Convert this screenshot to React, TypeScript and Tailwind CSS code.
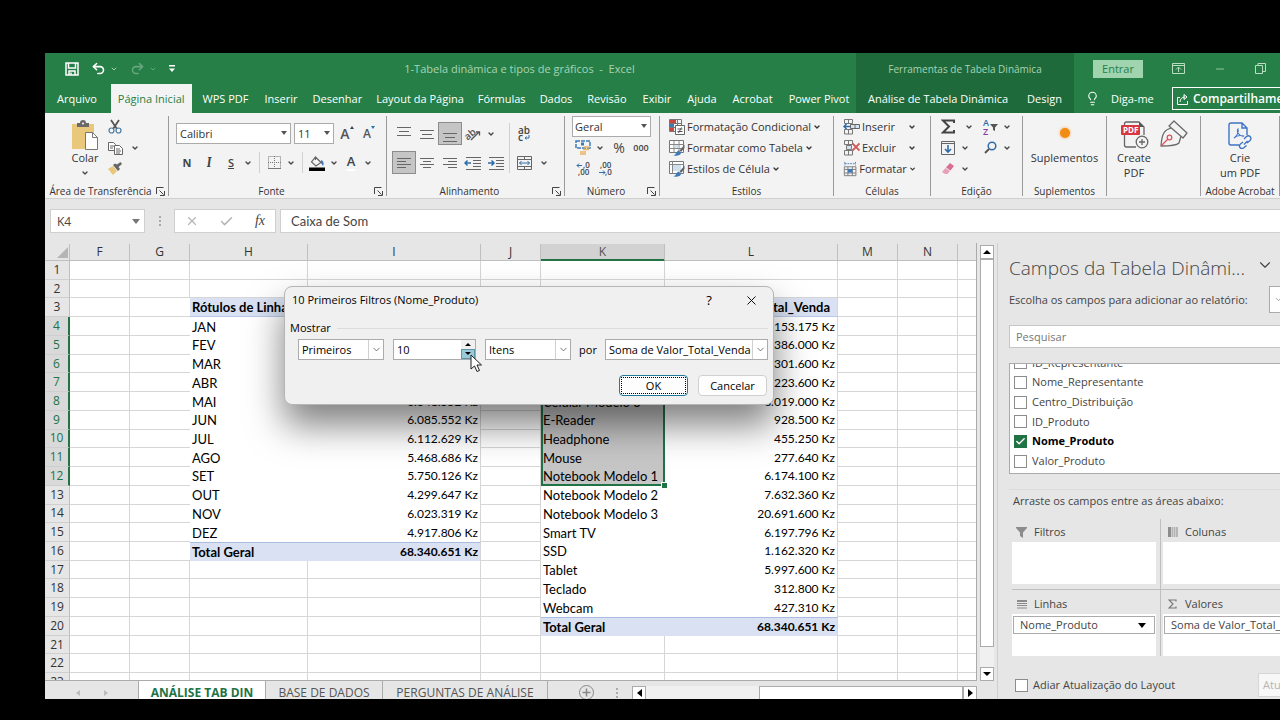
import { useState } from 'react';
import type { ReactNode } from 'react';
import clsx from 'clsx';
import { Check, ChevronDown, Lightbulb, Minus, Redo2, Undo2, X } from 'lucide-react';

type Cell = { text: string; kind: 'head' | 'body' | 'total' };

const tabs = [
  { name: 'Arquivo', className: 'px-2 mr-[6px]' },
  { name: 'Página Inicial', className: 'bg-[#f3f3f3] px-[7px] mr-[3px] text-[#267f46]' },
  { name: 'WPS PDF', className: 'px-2' },
  { name: 'Inserir', className: 'px-2' },
  { name: 'Desenhar', className: 'px-[7px]' },
  { name: 'Layout da Página', className: 'px-[7px]' },
  { name: 'Fórmulas', className: 'px-[7px]' },
  { name: 'Dados', className: 'px-[7px]' },
  { name: 'Revisão', className: 'px-2' },
  { name: 'Exibir', className: 'px-2' },
  { name: 'Ajuda', className: 'px-2' },
  { name: 'Acrobat', className: 'px-2' },
  { name: 'Power Pivot', className: 'pl-2' },
];

const columns = [
  { id: 'F', width: 'w-[60px]' },
  { id: 'G', width: 'w-[60px]' },
  { id: 'H', width: 'w-[118px]' },
  { id: 'I', width: 'w-[173px]' },
  { id: 'J', width: 'w-[60px]' },
  { id: 'K', width: 'w-[124px]' },
  { id: 'L', width: 'w-[173px]' },
  { id: 'M', width: 'w-[60px]' },
  { id: 'N', width: 'w-[60px]' },
];

// both pivot tables start on row 3
const months = [
  ['Rótulos de Linha', 'Soma de Valor_Total_Venda'],
  ['JAN', '5.418.320 Kz'],
  ['FEV', '5.106.744 Kz'],
  ['MAR', '5.882.190 Kz'],
  ['ABR', '6.034.460 Kz'],
  ['MAI', '6.341.552 Kz'],
  ['JUN', '6.085.552 Kz'],
  ['JUL', '6.112.629 Kz'],
  ['AGO', '5.468.686 Kz'],
  ['SET', '5.750.126 Kz'],
  ['OUT', '4.299.647 Kz'],
  ['NOV', '6.023.319 Kz'],
  ['DEZ', '4.917.806 Kz'],
  ['Total Geral', '68.340.651 Kz'],
];

const products = [
  ['Rótulos de Linha', 'Soma de Valor_Total_Venda'],
  ['Caixa de Som', '153.175 Kz'],
  ['Câmera', '386.000 Kz'],
  ['Celular Modelo 1', '4.301.600 Kz'],
  ['Celular Modelo 2', '6.223.600 Kz'],
  ['Celular Modelo 3', '8.019.000 Kz'],
  ['E-Reader', '928.500 Kz'],
  ['Headphone', '455.250 Kz'],
  ['Mouse', '277.640 Kz'],
  ['Notebook Modelo 1', '6.174.100 Kz'],
  ['Notebook Modelo 2', '7.632.360 Kz'],
  ['Notebook Modelo 3', '20.691.600 Kz'],
  ['Smart TV', '6.197.796 Kz'],
  ['SSD', '1.162.320 Kz'],
  ['Tablet', '5.997.600 Kz'],
  ['Teclado', '312.800 Kz'],
  ['Webcam', '427.310 Kz'],
  ['Total Geral', '68.340.651 Kz'],
];

function getCell(col: string, row: number): Cell | null {
  const source = col === 'H' || col === 'I' ? months : col === 'K' || col === 'L' ? products : null;
  const line = source?.[row - 3];
  if (!source || !line) return null;
  const text = line[col === 'H' || col === 'K' ? 0 : 1];
  const kind = row === 3 ? 'head' : row - 3 === source.length - 1 ? 'total' : 'body';
  return { text, kind };
}

/* ---------- small pieces ---------- */

function Caret({ label }: { label: string }) {
  return (
    <button aria-label={label} className="flex h-[21px] w-3 shrink-0 items-center justify-center">
      <ChevronDown size={8} strokeWidth={4} color="#444" />
    </button>
  );
}

function Tool({ label, active, children }: { label: string; active?: boolean; children: ReactNode }) {
  return (
    <button
      aria-label={label}
      className={clsx(
        'flex h-[21px] w-[22px] shrink-0 items-center justify-center',
        active && 'bg-[#c5c5c5] outline outline-[#8c8c8c]'
      )}
    >
      {children}
    </button>
  );
}

function Sep() {
  return <span className="mr-[3px] h-[21px] w-[6px] border-r border-[#d0d0d0]" />;
}

function Group({
  label,
  width,
  launcher,
  children,
}: {
  label: string;
  width: string;
  launcher?: boolean;
  children: ReactNode;
}) {
  return (
    <section aria-label={label} className={clsx('flex shrink-0 flex-col border-r border-[#9a9a9a]', width)}>
      <div className="h-[70px] shrink-0">{children}</div>
      <div className="flex h-[10px] shrink-0 items-center text-[10px]">
        <span className="flex-1 text-center whitespace-nowrap">{label}</span>
        {launcher && (
          <button aria-label={`Mais opções de ${label}`} className="mr-[3px]">
            <svg width="9" height="9" viewBox="0 0 9 9" fill="none" stroke="#444">
              <path d="M.5 7V.5h7M3.500 3.500l4 4M8.500 4v4.500H4" />
            </svg>
          </button>
        )}
      </div>
    </section>
  );
}

function Lines({ rows, color = '#666' }: { rows: [number, number, number][]; color?: string }) {
  return (
    <svg width="16" height="16" viewBox="0 0 16 16" stroke={color} fill="none">
      {rows.map(([x1, x2, y]) => (
        <path key={y} d={`M${x1} ${y}H${x2}`} />
      ))}
    </svg>
  );
}

function IndentIcon({ right }: { right?: boolean }) {
  return (
    <svg width="18" height="16" viewBox="0 0 18 16" fill="none">
      <path d="M2 2.500h15M9 5.500h8M9 8.500h8M9 11.500h8M2 14.500h15" stroke="#666" />
      <path d={right ? 'M1 8h6M4.500 5.500L7 8l-2.500 2.500' : 'M7 8H1M3.500 5.500L1 8l2.500 2.500'} stroke="#2f6ca8" strokeWidth="1.500" />
    </svg>
  );
}

function SaveIcon() {
  return (
    <svg width="14" height="14" viewBox="0 0 14 14" fill="none" stroke="#fff" strokeWidth="1.500">
      <path d="M1 1h12v12H1zM3.500 1v5h7V1" />
      <path d="M4 13V9h6v4" />
      <path d="M6 10.500v2" />
    </svg>
  );
}

function PasteIcon() {
  return (
    <svg width="28" height="30" viewBox="0 0 28 30">
      <rect x="1" y="4" width="22" height="25" fill="#e9c77b" />
      <path d="M6 3h3a3 3 0 016 0h3v4H6z" fill="#6a6a6a" />
      <circle cx="12" cy="3.500" r="1" fill="#fff" />
      <path d="M14.500 12.500h7l5 5v12h-12z" fill="#fff" stroke="#777" />
      <path d="M21.500 12.500v5h5" fill="none" stroke="#777" />
    </svg>
  );
}

function CutIcon() {
  return (
    <svg width="14" height="15" viewBox="0 0 14 15" fill="none">
      <path d="M3 1l6 9M11 1L5 10" stroke="#555" strokeWidth="1.800" />
      <circle cx="3.500" cy="11.500" r="2.500" stroke="#4a7ba0" strokeWidth="1.200" />
      <circle cx="10.500" cy="11.500" r="2.500" stroke="#4a7ba0" strokeWidth="1.200" />
    </svg>
  );
}

function CopyIcon() {
  return (
    <svg width="15" height="14" viewBox="0 0 15 14" fill="#fff" stroke="#666">
      <path d="M.5 1.500h5l2 2v6h-7zM2 5h4M2 7h3" />
      <path d="M6.500 4.500h5l3 3v6h-8zM8 8h4M8 10h5M8 12h4" />
    </svg>
  );
}

function BrushIcon() {
  return (
    <svg width="16" height="15" viewBox="0 0 16 15">
      <path d="M1 8l5-3 4 5-4 4z" fill="#e9c77b" />
      <path d="M6 4l5 6 2-2-1.500-2L15 3l-1.500-2L10 3.500 8 2.500z" fill="#666" />
    </svg>
  );
}

function FormatTableIcon({ variant }: { variant: 'cond' | 'table' | 'style' }) {
  if (variant === 'cond') {
    return (
      <svg width="16" height="16" viewBox="0 0 16 16" fill="none">
        <path d="M.5.5h12v12H.5zM.5 4.500h12M.5 8.500h12M4.500.5v12M8.500.5v12" stroke="#777" />
        <path d="M1 1h6v3H1z" fill="#c9433f" />
        <path d="M1 5h4v3H1z" fill="#3d7ab8" />
        <path d="M1 9h3v3H1z" fill="#c9433f" />
        <path d="M6.500 6.500h9v9h-9z" fill="#fff" stroke="#666" />
        <path d="M8.500 10h5M8.500 12.500h5M12.500 8.500l-3 5.500" stroke="#555" />
      </svg>
    );
  }
  return (
    <svg width="16" height="16" viewBox="0 0 16 16" fill="none">
      <path d="M.5.5h14v12H.5z" fill="#fff" stroke="#777" />
      <path
        d={variant === 'table' ? 'M.5 4.500h14M.5 8.500h14M5 .5v12M10 .5v12' : 'M.5 3.500h14M3.500 .5v12'}
        stroke="#888"
      />
      <path d={variant === 'table' ? 'M5.500 5h4v3h-4z' : 'M4 4h8v6H4z'} fill="#cfe0ef" />
      <path d="M15.500 4.500l-5 6 1.500 1.500 3.500-4z" fill="#666" />
      <path d="M4 15.500c3 0 3-4 5.500-5l2.500 2c0 3-4 3.500-8 3z" fill="#3d7ab8" />
    </svg>
  );
}

function CellsIcon({ variant }: { variant: 'insert' | 'delete' | 'format' }) {
  if (variant === 'format') {
    return (
      <svg width="16" height="16" viewBox="0 0 16 16" fill="none">
        <path d="M2 0v4M14 0v4M2 2h12" stroke="#3d7ab8" strokeDasharray="2 1" />
        <path d="M1.500 5.500h13v10h-13zM1.500 8.500h13M1.500 12.500h13M5.500 5.500v10M10.500 5.500v10" stroke="#777" />
        <path d="M5.500 8h5v4h-5z" fill="#3d7ab8" />
      </svg>
    );
  }
  return (
    <svg width="17" height="16" viewBox="0 0 17 16" fill="none">
      <path d="M1.500.5h8v4h-8zM5.500.5v4M1.500 10.500h8v4.500h-8zM5.500 10.500V15" stroke="#777" />
      {variant === 'insert' ? (
        <>
          <path d="M7.500 5.500h9v4h-9zM12 5.500v4" fill="#d5e3f0" stroke="#666" />
          <path d="M7 7.500H1M3.500 5L1 7.500 3.500 10" stroke="#2f6ca8" strokeWidth="1.500" />
        </>
      ) : (
        <>
          <path d="M3.500 5.500h5v4h-5z" fill="#d5e3f0" stroke="#777" />
          <path d="M9.500 3.500l7 7M16.500 3.500l-7 7" stroke="#cf5a5a" strokeWidth="1.800" />
        </>
      )}
    </svg>
  );
}

function PdfCreateIcon() {
  return (
    <svg width="29" height="28" viewBox="0 0 29 28" fill="none">
      <path d="M4.500 5V3a2 2 0 012-2H19l5 5v8M4.500 13v11a2 2 0 002 2H16" stroke="#666" strokeWidth="1.300" />
      <path d="M19 1v5h5z" fill="#555" />
      <rect x="1" y="4" width="19" height="10" rx="1" fill="#d7373f" />
      <text x="3" y="12" fontSize="8" fontWeight="700" fill="#fff" fontFamily="Open Sans, sans-serif">
        PDF
      </text>
      <circle cx="22" cy="21" r="5.800" fill="#f3f3f3" stroke="#666" strokeWidth="1.300" />
      <path d="M22 18v6M19 21h6" stroke="#666" strokeWidth="1.300" />
    </svg>
  );
}

function PenIcon() {
  return (
    <svg width="29" height="28" viewBox="0 0 29 28" fill="none" stroke="#6a6a6a" strokeWidth="1.300" strokeLinejoin="round">
      <path d="M10 6l5-5 13 12-4 5z" />
      <path d="M12 8C6 10 3 12 2 26c9 0 16-1 18-3l2-7" />
      <path d="M2 26l7-7" stroke="#d7575f" />
      <circle cx="10.500" cy="17.500" r="2.300" stroke="#d7575f" />
    </svg>
  );
}

function AcrobatIcon() {
  return (
    <svg width="26" height="28" viewBox="0 0 26 28" fill="none" stroke="#3f74c4" strokeWidth="1.400">
      <path d="M12 24H4a2 2 0 01-2-2V4a2 2 0 012-2h11l5 5v7M15 2v5h5" />
      <path d="M7 17c3-2 5-6 4-9-2 3 2 8 6 7-4-1-8 0-10 2z" strokeWidth="1.100" />
      <path d="M16 21l-2.500 2a2.500 2.500 0 003 4l3-2.500M20 22l3-2.500a2.500 2.500 0 00-3.500-4L17 18M17 23.500l3.500-3.500" />
    </svg>
  );
}

function LargeButton({ icon, lines, width }: { icon: ReactNode; lines: string[]; width: string }) {
  return (
    <button className={clsx('flex shrink-0 flex-col items-center pt-[3px]', width)}>
      <span className="flex h-[31px] items-center">{icon}</span>
      {lines.map((l) => (
        <span key={l} className="h-[15px] leading-[15px] whitespace-nowrap">
          {l}
        </span>
      ))}
    </button>
  );
}

/* ---------- header ---------- */

function Header() {
  return (
    <header className="flex h-[60px] shrink-0 bg-[#267f46] text-white">
      <div className="flex min-w-0 flex-1 flex-col">
        <div className="flex h-[31px] shrink-0 items-center">
          <div className="flex items-center gap-3 pl-5">
            <button aria-label="Salvar">
              <SaveIcon />
            </button>
            <button aria-label="Desfazer" className="flex items-center gap-1">
              <Undo2 size={15} strokeWidth={2.5} />
              <ChevronDown size={8} strokeWidth={3} className="opacity-60" />
            </button>
            <button aria-label="Refazer" className="flex items-center gap-1 opacity-30">
              <Redo2 size={15} strokeWidth={2.5} />
              <ChevronDown size={8} strokeWidth={3} />
            </button>
            <button aria-label="Personalizar barra">
              <svg width="6" height="8" viewBox="0 0 6 8" fill="#fff">
                <path d="M0 0h6v1.500H0zM0 3.500h6L3 7z" />
              </svg>
            </button>
          </div>
          <div className="flex-1 pl-2 text-center whitespace-pre text-[#a9d3b5]">1-Tabela dinâmica e tipos de gráficos  -  Excel</div>
        </div>
        <nav className="flex flex-1 pl-1">
          {tabs.map((t) => (
            <button key={t.name} className={clsx('shrink-0 whitespace-nowrap', t.className)}>
              {t.name}
            </button>
          ))}
        </nav>
      </div>
      <div className="flex w-[218px] shrink-0 flex-col bg-[#1e6a3a]">
        <div className="flex h-[31px] items-center justify-center text-[10px] text-[#a9d3b5]">Ferramentas de Tabela Dinâmica</div>
        <div className="flex flex-1 items-stretch justify-between px-3">
          <button className="whitespace-nowrap">Análise de Tabela Dinâmica</button>
          <button>Design</button>
        </div>
      </div>
      <div className="flex w-[206px] shrink-0 flex-col overflow-hidden">
        <div className="flex h-[31px] items-center justify-between pr-[14px] pl-[19px]">
          <button className="h-[18px] w-[50px] bg-[#9fd4af] text-[#267f46]">Entrar</button>
          <button aria-label="Opções da faixa">
            <svg width="13" height="11" viewBox="0 0 13 11" fill="none" stroke="#b9dcc3">
              <path d="M.5.5h12v10H.5zM.5 2.500h12M6.500 9V4.500M4 6.500l2.500-2.500L9 6.500" />
            </svg>
          </button>
          <button aria-label="Minimizar">
            <Minus size={12} strokeWidth={1.5} color="#b9dcc3" />
          </button>
          <button aria-label="Restaurar">
            <svg width="11" height="11" viewBox="0 0 11 11" fill="none" stroke="#b9dcc3">
              <path d="M.5 2.500h7v8h-7zM3 2.500V.5h7.500v8h-3" />
            </svg>
          </button>
        </div>
        <div className="flex flex-1 items-center pl-[11px]">
          <Lightbulb size={15} strokeWidth={1.7} className="shrink-0" />
          <button className="ml-[11px] w-[61px] shrink-0 text-left">Diga-me</button>
          <button className="flex h-[23px] shrink-0 items-center gap-1 border border-white px-1 text-[12px] font-semibold">
            <svg width="12" height="12" viewBox="0 0 12 12" fill="none" stroke="#fff">
              <path d="M3 4.500H.5v7h10V8M3 9c0-3 2-5 5-5M7 1.500L10 4 7 6.500z" />
            </svg>
            Compartilhamento
          </button>
        </div>
      </div>
    </header>
  );
}

/* ---------- ribbon ---------- */

function Ribbon() {
  return (
    <div className="flex h-[86px] shrink-0 items-start overflow-hidden border-b border-[#cfcfcf] bg-[#f3f3f3] pt-[3px] text-[#333]">
      <Group label="Área de Transferência" width="w-[124px]" launcher>
        <div className="flex">
          <div className="ml-[21px] flex w-[38px] flex-col items-center">
            <LargeButton icon={<PasteIcon />} lines={['Colar']} width="w-[38px]" />
            <ChevronDown size={8} strokeWidth={4} color="#444" className="mt-1" />
          </div>
          <div className="flex flex-col">
            <Tool label="Recortar">
              <CutIcon />
            </Tool>
            <div className="flex gap-[3px]">
              <Tool label="Copiar">
                <CopyIcon />
              </Tool>
              <Caret label="Opções de cópia" />
            </div>
            <Tool label="Pincel de formatação">
              <BrushIcon />
            </Tool>
          </div>
        </div>
      </Group>

      <Group label="Fonte" width="w-[218px]" launcher>
        <div className="flex flex-col gap-2 pt-[7px] pl-[7px]">
          <div className="flex items-center">
            <div className="relative mr-[3px]">
              <select aria-label="Fonte" className="h-[21px] w-[115px] appearance-none border border-[#ababab] bg-white px-[3px]">
                <option>Calibri</option>
              </select>
              <span className="pointer-events-none absolute top-2 right-1 border-x-[3px] border-t-[4px] border-x-transparent border-t-[#555]" />
            </div>
            <div className="relative mr-[2px]">
              <select aria-label="Tamanho" className="h-[21px] w-[40px] appearance-none border border-[#ababab] bg-white px-[3px]">
                <option>11</option>
              </select>
              <span className="pointer-events-none absolute top-2 right-1 border-x-[3px] border-t-[4px] border-x-transparent border-t-[#555]" />
            </div>
            <Tool label="Aumentar fonte">
              <span className="text-[14px] font-semibold text-[#555]">A</span>
              <span className="mb-3 border-x-[2px] border-b-[3px] border-x-transparent border-b-[#345]" />
            </Tool>
            <Tool label="Diminuir fonte">
              <span className="text-[12px] font-semibold text-[#555]">A</span>
              <span className="mb-3 border-x-[2px] border-t-[3px] border-x-transparent border-t-[#27a]" />
            </Tool>
          </div>
          <div className="flex items-center text-[#444]">
            <Tool label="Negrito">
              <b>N</b>
            </Tool>
            <Tool label="Itálico">
              <i className="font-serif text-[13px] font-semibold">I</i>
            </Tool>
            <Tool label="Sublinhado">
              <u className="font-semibold">S</u>
            </Tool>
            <Caret label="Tipos de sublinhado" />
            <Sep />
            <Tool label="Bordas">
              <svg width="13" height="13" viewBox="0 0 13 13" fill="none" stroke="#777">
                <path d="M.5.5h12v12H.5zM6.500 0v13M0 6.500h13" strokeDasharray="1 1" />
                <path d="M0 12.500h13" />
              </svg>
            </Tool>
            <Caret label="Tipos de borda" />
            <Sep />
            <Tool label="Cor de preenchimento">
              <svg width="16" height="16" viewBox="0 0 16 16" fill="none">
                <path d="M6.500 2L12 7.500 7 11 2.500 7zM6.500 5V1.500" stroke="#666" strokeWidth="1.200" />
                <path d="M12 5c3 1 3 4 2 6l-2-3z" fill="#3d7ab8" />
                <path d="M0 12.500h16V16H0z" fill="#000" />
              </svg>
            </Tool>
            <Caret label="Cores de preenchimento" />
            <Tool label="Cor da fonte">
              <span className="border-b-2 border-white text-[13px] leading-[15px] font-semibold">A</span>
            </Tool>
            <Caret label="Cores da fonte" />
          </div>
        </div>
      </Group>

      <Group label="Alinhamento" width="w-[178px]" launcher>
        <div className="flex pt-[7px] pl-[6px]">
          <div className="flex flex-col gap-2">
            <div className="flex gap-px">
              <Tool label="Alinhar acima">
                <Lines rows={[[1, 15, 1.5], [3, 13, 5.5], [1, 15, 9.5]]} />
              </Tool>
              <Tool label="Alinhar no meio">
                <Lines rows={[[1, 15, 4.5], [3, 13, 8.5], [1, 15, 12.5]]} />
              </Tool>
              <Tool label="Alinhar abaixo" active>
                <Lines rows={[[1, 15, 7.5], [3, 13, 11.5], [1, 15, 15.5]]} />
              </Tool>
              <Tool label="Orientação">
                <svg width="18" height="16" viewBox="0 0 18 16">
                  <text x="1" y="12" fontSize="10" fontWeight="600" fill="#555" transform="rotate(-40 6 10)">
                    ab
                  </text>
                  <path d="M7 14l8-8M12 6h3.500v3.500" fill="none" stroke="#555" strokeWidth="1.300" />
                </svg>
              </Tool>
              <Caret label="Opções de orientação" />
            </div>
            <div className="flex gap-px">
              <Tool label="Alinhar à esquerda" active>
                <Lines rows={[[1, 15, 3.5], [1, 10, 6.5], [1, 15, 9.5], [1, 10, 12.5]]} />
              </Tool>
              <Tool label="Centralizar">
                <Lines rows={[[1, 15, 3.5], [4, 12, 6.5], [1, 15, 9.5], [4, 12, 12.5]]} />
              </Tool>
              <Tool label="Alinhar à direita">
                <Lines rows={[[1, 15, 3.5], [6, 15, 6.5], [1, 15, 9.5], [6, 15, 12.5]]} />
              </Tool>
              <Tool label="Diminuir recuo">
                <IndentIcon />
              </Tool>
              <Tool label="Aumentar recuo">
                <IndentIcon right />
              </Tool>
            </div>
          </div>
          <div className="ml-[2px] flex flex-col gap-2 border-l border-[#d0d0d0] pl-[3px]">
            <Tool label="Quebrar texto">
              <svg width="14" height="16" viewBox="0 0 14 16" fontWeight="600">
                <text x="1" y="8" fontSize="10" fill="#444">
                  ab
                </text>
                <text x="1" y="15" fontSize="10" fill="#444">
                  c
                </text>
                <path d="M12 9v3H8M9.500 10.500L8 12l1.500 1.500" fill="none" stroke="#2f6ca8" />
              </svg>
            </Tool>
            <div className="flex gap-[3px]">
              <Tool label="Mesclar e centralizar">
                <svg width="15" height="14" viewBox="0 0 15 14" fill="none">
                  <path d="M.5.5h14v13H.5zM.5 3.500h14M.5 10.500h14M7.500.5v3M7.500 10.500v3" stroke="#666" />
                  <path d="M2.500 7h10M4.500 5l-2 2 2 2M10.500 5l2 2-2 2" stroke="#2f6ca8" />
                </svg>
              </Tool>
              <Caret label="Opções de mesclagem" />
            </div>
          </div>
        </div>
      </Group>

      <Group label="Número" width="w-[95px]" launcher>
        <div className="pl-[7px]">
          <div className="relative w-[79px]">
            <select aria-label="Formato" className="h-[21px] w-full appearance-none border border-[#ababab] bg-white px-[2px]">
              <option>Geral</option>
            </select>
            <span className="pointer-events-none absolute top-2 right-1 border-x-[3px] border-t-[4px] border-x-transparent border-t-[#555]" />
          </div>
          <div className="flex">
            <Tool label="Formato de contabilização">
              <svg width="16" height="15" viewBox="0 0 16 15" fill="none">
                <path d="M1 1h14v7H1z" stroke="#3d7ab8" strokeWidth="1.500" strokeDasharray="4 1" />
                <path d="M6 2.500h3v3H6z" fill="#3d7ab8" />
                <path d="M9 7h6M8 9.500h6M5 12h6M5 14h6" stroke="#e9b766" strokeWidth="1.600" />
              </svg>
            </Tool>
            <Caret label="Moedas" />
            <Tool label="Porcentagem">
              <span className="ml-1 text-[14px] text-[#444]">%</span>
            </Tool>
            <span className="w-[2px]" />
            <Tool label="Separador de milhares">
              <span className="text-[9px] font-semibold text-[#444]">000</span>
            </Tool>
          </div>
          <div className="flex">
            <Tool label="Aumentar casas decimais">
              <svg width="15" height="14" viewBox="0 0 15 14" fontSize="8" fontWeight="600" fill="#444">
                <text x="7" y="6">,0</text>
                <text x="2" y="13">,00</text>
                <path d="M6 3.500H1M3 1.500l-2 2 2 2" fill="none" stroke="#2f6ca8" />
              </svg>
            </Tool>
            <Tool label="Diminuir casas decimais">
              <svg width="15" height="14" viewBox="0 0 15 14" fontSize="8" fontWeight="600" fill="#444">
                <text x="2" y="6">,00</text>
                <text x="7" y="13">,0</text>
                <path d="M1 10.500h6M5 8.500l2 2-2 2" fill="none" stroke="#2f6ca8" />
              </svg>
            </Tool>
          </div>
        </div>
      </Group>

      <Group label="Estilos" width="w-[174px]">
        <div className="flex flex-col pl-[9px]">
          <button className="flex h-[21px] items-center gap-[2px]">
            <FormatTableIcon variant="cond" />
            Formatação Condicional
            <ChevronDown size={8} strokeWidth={4} />
          </button>
          <button className="flex h-[21px] items-center gap-[2px]">
            <FormatTableIcon variant="table" />
            Formatar como Tabela
            <ChevronDown size={8} strokeWidth={4} />
          </button>
          <button className="flex h-[21px] items-center gap-[2px]">
            <FormatTableIcon variant="style" />
            Estilos de Célula
            <ChevronDown size={8} strokeWidth={4} />
          </button>
        </div>
      </Group>

      <Group label="Células" width="w-[97px]">
        <div className="flex flex-col pl-[9px]">
          {(
            [
              ['insert', 'Inserir'],
              ['delete', 'Excluir'],
              ['format', 'Formatar'],
            ] as const
          ).map(([variant, label]) => (
            <button key={variant} className="flex h-[21px] w-[73px] items-center gap-[2px]">
              <CellsIcon variant={variant} />
              <span className="flex-1 text-left">{label}</span>
              <ChevronDown size={8} strokeWidth={4} />
            </button>
          ))}
        </div>
      </Group>

      <Group label="Edição" width="w-[92px]">
        <div className="pl-[6px]">
          <div className="flex">
            <Tool label="Soma">
              <svg width="14" height="15" viewBox="0 0 14 15" fill="none" stroke="#444" strokeWidth="2">
                <path d="M13 4V1.500H2L8 7.500l-6 6h11V11" />
              </svg>
            </Tool>
            <span className="w-1" />
            <Caret label="Funções" />
            <span className="w-1" />
            <Tool label="Classificar e filtrar">
              <svg width="15" height="16" viewBox="0 0 15 16" fontSize="9" fontWeight="600">
                <text x="0" y="7" fill="#2f6ca8">A</text>
                <text x="0" y="16" fill="#8b3fa0">Z</text>
                <path d="M7 5h8l-3 3.500V12l-2-1V8.500z" fill="#555" />
              </svg>
            </Tool>
            <Caret label="Opções de classificação" />
          </div>
          <div className="flex">
            <Tool label="Preencher">
              <svg width="14" height="14" viewBox="0 0 14 14" fill="none">
                <path d="M.5.5h13v13H.5zM.5 2.500h13" stroke="#666" />
                <path d="M7 4v7M4 8l3 3 3-3" stroke="#2f6ca8" strokeWidth="1.600" />
              </svg>
            </Tool>
            <Caret label="Opções de preenchimento" />
            <span className="w-2" />
            <Tool label="Localizar">
              <svg width="13" height="13" viewBox="0 0 13 13" fill="none">
                <circle cx="8" cy="5" r="3.800" stroke="#2f6ca8" strokeWidth="1.500" />
                <path d="M5 8l-4 4" stroke="#555" strokeWidth="2" />
              </svg>
            </Tool>
            <Caret label="Opções de localização" />
          </div>
          <div className="flex">
            <Tool label="Limpar">
              <svg width="13" height="12" viewBox="0 0 13 12">
                <path d="M8 0l4 3-3.500 4.500-4.500-3z" fill="#d96d93" />
                <path d="M3.500 5l4.500 3-2.500 3H3L0 9z" fill="#e7a0b8" />
              </svg>
            </Tool>
            <Caret label="Opções de limpeza" />
          </div>
        </div>
      </Group>

      <Group label="Suplementos" width="w-[84px]">
        <LargeButton
          width="w-full"
          lines={['Suplementos']}
          icon={<span className="mb-1 size-[10px] rounded-full bg-[#f28c13] shadow-[0_0_3px_#f6a94a]" />}
        />
      </Group>

      <section aria-label="PDF" className="flex h-20 w-[94px] shrink-0 items-start border-r border-[#9a9a9a] pl-1">
        <LargeButton icon={<PdfCreateIcon />} lines={['Create', 'PDF']} width="w-[46px]" />
        <button aria-label="Assinar" className="flex h-[31px] w-8 items-center justify-center pt-[5px]">
          <PenIcon />
        </button>
      </section>

      <Group label="Adobe Acrobat" width="w-[79px]">
        <LargeButton icon={<AcrobatIcon />} lines={['Crie', 'um PDF']} width="w-full" />
      </Group>
    </div>
  );
}

/* ---------- formula bar ---------- */

function FormulaBar() {
  return (
    <div className="flex h-[44px] shrink-0 items-center bg-[#e6e6e6] pl-[5px] text-[12px] text-[#444]">
      <div className="relative">
        <input aria-label="Caixa de nome" defaultValue="K4" className="h-6 w-[95px] border border-[#cfcfcf] bg-white px-[6px]" />
        <span className="absolute top-[10px] right-[5px] border-x-4 border-t-[5px] border-x-transparent border-t-[#777]" />
      </div>
      <span className="flex w-[29px] flex-col items-center gap-[2px]">
        <i className="size-[2px] bg-[#aaa]" />
        <i className="size-[2px] bg-[#aaa]" />
        <i className="size-[2px] bg-[#aaa]" />
      </span>
      <div className="flex h-6 w-[102px] items-center justify-between border border-[#cfcfcf] bg-white px-[10px]">
        <button aria-label="Cancelar edição">
          <X size={14} strokeWidth={2} color="#b5b5b5" />
        </button>
        <button aria-label="Confirmar edição">
          <Check size={15} strokeWidth={2.5} color="#b5b5b5" />
        </button>
        <button aria-label="Inserir função" className="font-['Liberation_Serif',serif] text-[14px] text-[#444] italic">
          fx
        </button>
      </div>
      <input
        aria-label="Barra de fórmulas"
        defaultValue="Caixa de Som"
        className="ml-1 h-6 min-w-0 flex-1 border border-r-0 border-[#cfcfcf] bg-white px-[10px] font-['Lato',sans-serif] text-[13px]"
      />
    </div>
  );
}

/* ---------- grid ---------- */

function Sheet() {
  const rows = Array.from({ length: 23 }, (_, i) => i + 1);

  return (
    <div className="min-h-0 flex-1 overflow-hidden border-r border-[#ababab] bg-[#e6e6e6] pt-px">
      <table className="h-[448px] w-full table-fixed border-separate border-spacing-0 bg-white font-['Lato',sans-serif] text-[12px] leading-4 text-black">
        <thead>
          <tr className="bg-[#e6e6e6] text-center font-['Open_Sans',sans-serif] text-[#333]">
            <th className="w-[25px] border-r border-b border-[#bfbfbf] p-0">
              <svg width="11" height="11" viewBox="0 0 11 11" className="ml-3">
                <path d="M11 0v11H0z" fill="#b5b5b5" />
              </svg>
            </th>
            {columns.map((c) => (
              <th
                key={c.id}
                className={clsx(
                  'border-r border-b border-r-[#bfbfbf] p-0 font-normal',
                  c.width,
                  c.id === 'K'
                    ? 'border-b-[#217346] bg-[#d2d2d2] text-[#555] shadow-[inset_0_-1px_#217346]'
                    : 'border-b-[#bfbfbf]'
                )}
              >
                {c.id}
              </th>
            ))}
            <th className="border-b border-[#bfbfbf] p-0" />
          </tr>
        </thead>
        <tbody>
          {rows.map((r) => {
            const picked = r >= 4 && r <= 12;
            return (
              <tr key={r}>
                <th
                  className={clsx(
                    "border-b border-b-[#cfcfcf] p-0 text-center font-['Open_Sans',sans-serif] font-normal",
                    picked
                      ? 'border-r-2 border-r-[#217346] bg-[#d9d9d9] text-[#217346]'
                      : 'border-r border-r-[#bfbfbf] bg-[#e6e6e6] text-[#333]'
                  )}
                >
                  {r}
                </th>
                {columns.map((c) => {
                  const cell = getCell(c.id, r);
                  const right = c.id === 'I' || c.id === 'L';
                  const selected = c.id === 'K' && picked;
                  return (
                    <td
                      key={c.id}
                      className={clsx(
                        'relative px-[2px] py-0 whitespace-nowrap',
                        right && 'text-right',
                        (!right || cell?.kind === 'head') && 'text-[13px]',
                        !cell && 'border-b border-b-[#d6d6d6]',
                        !cell && !(c.id === 'G' && r >= 3 && r <= 16) && 'border-r border-r-[#d6d6d6]',
                        cell && right && 'border-r border-r-[#d6d6d6]',
                        cell && cell.kind !== 'body' && 'bg-[#d9e1f2] font-bold',
                        cell?.kind === 'head' && 'border-b border-b-[#b8c8e6]',
                        cell?.kind === 'total' && 'border-t border-t-[#a9bde0]',
                        selected && 'bg-[#c6c6c6]',
                        selected && r < 12 && 'shadow-[inset_2px_0_#217346,inset_-2px_0_#217346]',
                        selected && r === 12 && 'shadow-[inset_2px_0_#217346,inset_-2px_-2px_#217346]'
                      )}
                    >
                      {cell && <span className={clsx(cell.kind === 'head' && right && 'pr-[5px]')}>{cell.text}</span>}
                      {selected && r === 12 && (
                        <span className="absolute -right-[2px] -bottom-[2px] size-[6px] border-t border-l border-white bg-[#217346]" />
                      )}
                    </td>
                  );
                })}
                <td className="border-b border-[#d6d6d6] p-0" />
              </tr>
            );
          })}
        </tbody>
      </table>
    </div>
  );
}

function SheetTabs() {
  return (
    <div className="h-[19px] shrink-0 overflow-hidden border-t border-[#ababab] bg-[#e6e6e6] text-[12px] text-[#555]">
      <div className="flex h-[23px] items-stretch">
        <div className="flex w-[94px] items-center justify-center gap-6 border-r border-[#ababab]">
          <span className="border-y-[3px] border-r-[4px] border-y-transparent border-r-[#bbb]" />
          <span className="border-y-[3px] border-l-[4px] border-y-transparent border-l-[#bbb]" />
        </div>
        <button className="w-[126px] bg-white font-bold text-[#217346]">ANÁLISE TAB DIN</button>
        <button className="w-[118px] border-x border-[#ababab]">BASE DE DADOS</button>
        <button className="w-[165px] border-r border-[#ababab]">PERGUNTAS DE ANÁLISE</button>
        <button aria-label="Nova planilha" className="ml-[31px]">
          <svg width="15" height="15" viewBox="0 0 15 15" fill="none" stroke="#888">
            <circle cx="7.500" cy="7.500" r="7" />
            <path d="M7.500 3.500v8M3.500 7.500h8" strokeWidth="1.500" />
          </svg>
        </button>
        <span className="ml-[22px] flex w-[2px] flex-col justify-center gap-[2px]">
          <i className="size-[2px] bg-[#aaa]" />
          <i className="size-[2px] bg-[#aaa]" />
          <i className="size-[2px] bg-[#aaa]" />
        </span>
        <div className="mt-[5px] ml-[14px] flex flex-1 bg-[#f0f0f0]">
          <button aria-label="Rolar para a esquerda" className="flex w-[14px] items-center justify-center border border-[#ababab] bg-white">
            <span className="mb-1 border-y-4 border-r-[5px] border-y-transparent border-r-black" />
          </button>
          <span className="flex-1" />
          <span className="w-[204px] border border-[#ababab] bg-white" />
          <button aria-label="Rolar para a direita" className="flex w-[14px] items-center justify-center border border-[#ababab] bg-white">
            <span className="mb-1 border-y-4 border-l-[5px] border-y-transparent border-l-black" />
          </button>
        </div>
      </div>
    </div>
  );
}

function VerticalScroll() {
  return (
    <div className="flex w-[20px] shrink-0 flex-col bg-[#e6e6e6] pt-[2px] pr-[3px] pb-[18px] pl-[3px]">
      <button aria-label="Rolar para cima" className="flex h-[14px] items-center justify-center border border-[#ababab] bg-white">
        <span className="border-x-4 border-b-[4px] border-x-transparent border-b-black" />
      </button>
      <div className="flex flex-1 flex-col bg-[#f0f0f0] pb-5">
        <span className="flex-1 border border-[#ababab] bg-white" />
      </div>
      <button aria-label="Rolar para baixo" className="flex h-[14px] items-center justify-center border border-[#ababab] bg-white">
        <span className="border-x-4 border-t-[4px] border-x-transparent border-t-black" />
      </button>
    </div>
  );
}

/* ---------- pivot fields pane ---------- */

function Tick({ id, label, checked }: { id: string; label: string; checked?: boolean }) {
  const [on, setOn] = useState(!!checked);
  return (
    <div className="flex items-center">
      <span className="relative flex">
        <input
          id={id}
          type="checkbox"
          checked={on}
          onChange={() => setOn(!on)}
          className="size-[13px] appearance-none border border-[#8c8c8c] bg-white checked:border-[#217346] checked:bg-[#217346]"
        />
        {on && <Check size={11} strokeWidth={3} color="#fff" className="pointer-events-none absolute top-px left-px" />}
      </span>
      <label htmlFor={id} className={clsx('pl-[5px] whitespace-nowrap', on && 'font-bold text-black')}>
        {label}
      </label>
    </div>
  );
}

function Area({ title, icon, field }: { title: string; icon: ReactNode; field?: string }) {
  return (
    <div className="flex h-[65px] flex-col">
      <div className="flex h-[23px] items-center gap-[6px] pt-[3px] pl-[3px]">
        <span className="flex w-[13px] justify-center">{icon}</span>
        {title}
      </div>
      <div className="h-[42px] bg-white p-px pt-[2px]">
        {field && (
          <button className="flex h-[18px] w-full items-center justify-between border border-[#ababab] pr-2 pl-[6px] whitespace-nowrap">
            {field}
            <span className="border-x-4 border-t-[5px] border-x-transparent border-t-black" />
          </button>
        )}
      </div>
    </div>
  );
}

function FieldsPane() {
  return (
    <aside className="flex w-[283px] shrink-0 flex-col overflow-hidden border-l border-[#cfcfcf] bg-[#e6e6e6] pl-[11px] text-[#444]">
      <div className="flex h-[41px] items-end">
        <h2 className="w-[247px] shrink-0 text-[19px] leading-8 font-light whitespace-nowrap">Campos da Tabela Dinâmi...</h2>
        <ChevronDown size={18} strokeWidth={1.5} className="mb-[10px]" />
      </div>
      <div className="mt-[2px] flex h-[27px] items-center">
        <span className="w-[260px] shrink-0">Escolha os campos para adicionar ao relatório:</span>
        <button aria-label="Ferramentas" className="h-[27px] w-8 shrink-0 border border-[#ababab] bg-white pl-1">
          <ChevronDown size={9} color="#888" />
        </button>
      </div>
      <input
        aria-label="Pesquisar"
        placeholder="Pesquisar"
        className="mt-3 h-[23px] border border-r-0 border-[#c6c6c6] bg-white px-[6px] placeholder:text-[#777]"
      />
      <div className="mt-[15px] flex h-[111px] flex-col justify-end overflow-hidden border border-r-0 border-[#ababab] bg-white pb-[2px] pl-1">
        <div className="grid h-[118px] shrink-0">
          <Tick id="rep-id" label="ID_Representante" />
          <Tick id="rep-nome" label="Nome_Representante" />
          <Tick id="centro" label="Centro_Distribuição" />
          <Tick id="prod-id" label="ID_Produto" />
          <Tick id="prod-nome" label="Nome_Produto" checked />
          <Tick id="prod-valor" label="Valor_Produto" />
        </div>
      </div>
      <div className="mt-[15px] h-[30px] border-t border-[#dcdcdc] pl-1 leading-[22px]">Arraste os campos entre as áreas abaixo:</div>
      <div className="ml-[3px] flex">
        <div className="w-[149px] shrink-0 border-r border-[#bfbfbf]">
          <div className="h-[71px] border-b border-[#bfbfbf] pr-1">
            <Area
              title="Filtros"
              icon={
                <svg width="11" height="11" viewBox="0 0 11 11" fill="#8c8c8c">
                  <path d="M0 0h11v1L7 5.500V11L4 9V5.500L0 1z" />
                </svg>
              }
            />
          </div>
          <div className="pt-px pr-1">
            <Area
              title="Linhas"
              field="Nome_Produto"
              icon={
                <svg width="10" height="9" viewBox="0 0 10 9" fill="#8c8c8c">
                  <path d="M0 0h10v2H0zM0 3h10v1H0zM0 5h10v1H0zM0 7.500h10v1H0z" />
                </svg>
              }
            />
          </div>
        </div>
        <div className="w-[149px] shrink-0">
          <div className="h-[71px] border-b border-[#bfbfbf] pl-[2px]">
            <Area
              title="Colunas"
              icon={
                <svg width="10" height="10" viewBox="0 0 10 10" fill="#b5b5b5">
                  <path d="M0 0h3v10H0z" fill="#8c8c8c" />
                  <path d="M3.500 0h2v10h-2zM6 0h1.500v10H6zM8 0h2v10H8z" />
                </svg>
              }
            />
          </div>
          <div className="pt-px pl-[2px]">
            <Area
              title="Valores"
              field="Soma de Valor_Total_..."
              icon={
                <svg width="9" height="10" viewBox="0 0 9 10" fill="none" stroke="#777" strokeWidth="1.200">
                  <path d="M8 2.500V1H1l4 4-4 4h7V7.500" />
                </svg>
              }
            />
          </div>
        </div>
      </div>
      <div className="mt-[17px] ml-[6px] flex h-6 shrink-0 items-center">
        <div className="w-[243px] shrink-0">
          <Tick id="adiar" label="Adiar Atualização do Layout" />
        </div>
        <button disabled className="h-6 w-20 shrink-0 border border-[#d6d6d6] bg-[#f7f7f7] pl-1 text-left text-[#b5b5b5]">
          Atualizar
        </button>
      </div>
    </aside>
  );
}

/* ---------- dialog ---------- */

function DialogSelect({ label, value, width }: { label: string; value: string; width: string }) {
  return (
    <div className={clsx('relative shrink-0', width)}>
      <select aria-label={label} className="h-[21px] w-full appearance-none border border-[#ababab] bg-white pl-[3px] text-[11px]">
        <option>{value}</option>
      </select>
      <span className="pointer-events-none absolute top-px right-px flex h-[19px] w-[15px] items-center justify-center border-l border-[#d0d0d0]">
        <ChevronDown size={11} strokeWidth={1.75} color="#555" />
      </span>
    </div>
  );
}

function TopTenDialog() {
  const [count, setCount] = useState(10);

  return (
    <div
      role="dialog"
      aria-label="10 Primeiros Filtros"
      className="absolute top-[233px] left-[239px] w-[490px] rounded-lg border border-[#b5b5b5] bg-[#f0f0f0] pb-2 text-black shadow-[0_20px_36px_rgba(0,0,0,0.5)]"
    >
      <div className="flex h-[26px] items-center pr-[14px] pl-[7px]">
        <span className="flex-1">10 Primeiros Filtros (Nome_Produto)</span>
        <button aria-label="Ajuda" className="w-5 text-[13px]">
          ?
        </button>
        <button aria-label="Fechar" className="flex w-10 justify-end">
          <X size={15} strokeWidth={1.5} />
        </button>
      </div>
      <fieldset>
        <div className="flex h-[26px] items-center gap-[6px] pt-1 pr-[5px] pl-[5px]">
          <span>Mostrar</span>
          <span className="h-px flex-1 bg-[#dcdcdc]" />
        </div>
        <div className="flex items-center pl-[13px]">
          <DialogSelect label="Tipo" value="Primeiros" width="w-[86px]" />
          <div className="ml-[9px] flex h-[21px] w-[83px] border border-[#ababab] bg-white">
            <input
              aria-label="Quantidade"
              value={count}
              onChange={(e) => setCount(Number(e.target.value) || 0)}
              className="w-[67px] px-[3px]"
            />
            <div className="flex flex-1 flex-col">
              <button aria-label="Aumentar" onClick={() => setCount(count + 1)} className="flex flex-1 items-center justify-center bg-[#f0f0f0]">
                <span className="border-x-[3px] border-b-[3px] border-x-transparent border-b-black" />
              </button>
              <button
                aria-label="Diminuir"
                onClick={() => setCount(count - 1)}
                className="flex flex-1 items-center justify-center border border-[#5a94a8] bg-[#9cc9d8]"
              >
                <span className="border-x-[3px] border-t-[3px] border-x-transparent border-t-black" />
              </button>
            </div>
          </div>
          <span className="w-[9px]" />
          <DialogSelect label="Unidade" value="Itens" width="w-[86px]" />
          <span className="flex-1 text-center">por</span>
          <DialogSelect label="Valor" value="Soma de Valor_Total_Venda" width="w-[163px]" />
          <span className="w-[5px]" />
        </div>
      </fieldset>
      <div className="mt-[15px] flex justify-end gap-[10px] pr-[6px]">
        <button className="h-[21px] w-[69px] rounded border border-[#1f7a9c] bg-[#fdfdfd] p-px">
          <span className="flex h-full items-center justify-center border border-dotted border-black">OK</span>
        </button>
        <button className="h-[21px] w-[69px] rounded border border-[#d0d0d0] bg-[#fdfdfd]">Cancelar</button>
      </div>
      <svg width="12" height="19" viewBox="0 0 12 19" className="absolute top-[67px] left-[185px]">
        <path d="M1 1v14l3.500-3 2.500 5.500 2.500-1L7 11h4.500z" fill="#fff" stroke="#222" />
      </svg>
    </div>
  );
}

export default function App() {
  return (
    <div className="h-screen overflow-hidden bg-black pt-[53px] pb-[21px] pl-[45px] font-['Open_Sans',sans-serif] text-[11px] leading-4">
      <div className="relative flex h-full flex-col overflow-hidden bg-[#e6e6e6]">
        <Header />
        <Ribbon />
        <FormulaBar />
        <div className="flex min-h-0 flex-1">
          <main className="flex min-w-0 flex-1 flex-col">
            <Sheet />
            <SheetTabs />
          </main>
          <VerticalScroll />
          <FieldsPane />
        </div>
        <TopTenDialog />
      </div>
    </div>
  );
}
